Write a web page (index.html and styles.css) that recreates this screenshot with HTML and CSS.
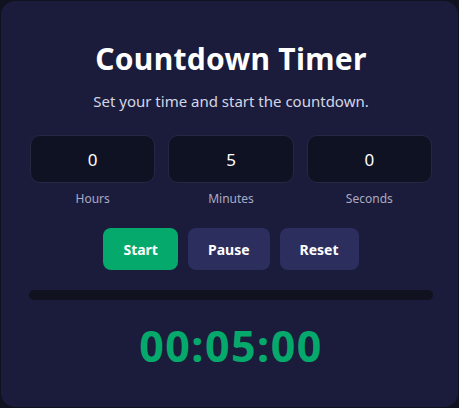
FILE: index.html
```html
<!DOCTYPE html>
<html lang="en">
<head>
<meta charset="utf-8">
<title>Countdown Timer</title>
<link rel="stylesheet" href="styles.css">
</head>
<body>
<main class="card">
  <h1 class="title">Countdown Timer</h1>
  <p class="subtitle">Set your time and start the countdown.</p>
  <div class="inputs">
    <label class="field">
      <input class="num" type="number" value="0" min="0">
      <span class="label">Hours</span>
    </label>
    <label class="field">
      <input class="num" type="number" value="5" min="0">
      <span class="label">Minutes</span>
    </label>
    <label class="field">
      <input class="num" type="number" value="0" min="0">
      <span class="label">Seconds</span>
    </label>
  </div>
  <div class="buttons">
    <button class="btn btn-start">Start</button>
    <button class="btn btn-muted">Pause</button>
    <button class="btn btn-muted">Reset</button>
  </div>
  <div class="progress"><div class="progress-fill" style="width:0%"></div></div>
  <div class="display">00:05:00</div>
</main>
</body>
</html>
```
FILE: styles.css
```css
* { box-sizing: border-box; }
html, body { margin: 0; padding: 0; }
body {
  background: #11121f;
  font-family: "Noto Sans", "Open Sans", sans-serif;
  width: 459px;
  height: 408px;
  padding: 1px 0 0 1px;
  overflow: hidden;
}
.card {
  width: 457px;
  height: 406px;
  background: #1b1c3b;
  border-radius: 14px;
  padding: 38px 25px 0 28px;
  display: flex;
  flex-direction: column;
  align-items: stretch;
}
.title {
  margin: 0;
  text-align: center;
  color: #ffffff;
  font-size: 30px;
  font-weight: 700;
  letter-spacing: 0.3px;
  line-height: 40px;
}
.subtitle {
  margin: 12px 0 0;
  text-align: center;
  color: #d4d6e6;
  font-size: 15px;
  line-height: 20px;
}
.inputs {
  margin-top: 24px;
  display: grid;
  grid-template-columns: repeat(3, 1fr);
  gap: 13px;
  padding: 0 1px;
}
.field {
  display: flex;
  flex-direction: column;
  align-items: center;
}
.num {
  width: 100%;
  height: 48px;
  background: #0f1222;
  border: 1px solid #262842;
  border-radius: 10px;
  color: #ffffff;
  font-family: inherit;
  font-size: 17px;
  text-align: center;
  outline: none;
  -moz-appearance: textfield;
}
.num::-webkit-outer-spin-button,
.num::-webkit-inner-spin-button { -webkit-appearance: none; margin: 0; }
.label {
  margin-top: 8px;
  color: #a9abc3;
  font-size: 12px;
  line-height: 16px;
}
.buttons {
  margin-top: 21px;
  display: flex;
  justify-content: center;
  gap: 10px;
}
.btn {
  height: 42px;
  padding: 0 20px;
  border: none;
  border-radius: 8px;
  color: #ffffff;
  font-family: inherit;
  font-size: 14px;
  font-weight: 700;
}
.btn-start { background: #05a96b; }
.btn-muted { background: #2c2e5e; }
.progress {
  margin-top: 20px;
  height: 10px;
  background: #10131f;
  border-radius: 5px;
  overflow: hidden;
}
.progress-fill { height: 100%; background: #05a96b; }
.display {
  margin-top: 21px;
  text-align: center;
  color: #05a96b;
  font-size: 43px;
  font-weight: 700;
  letter-spacing: 1.5px;
  line-height: 50px;
}
```
